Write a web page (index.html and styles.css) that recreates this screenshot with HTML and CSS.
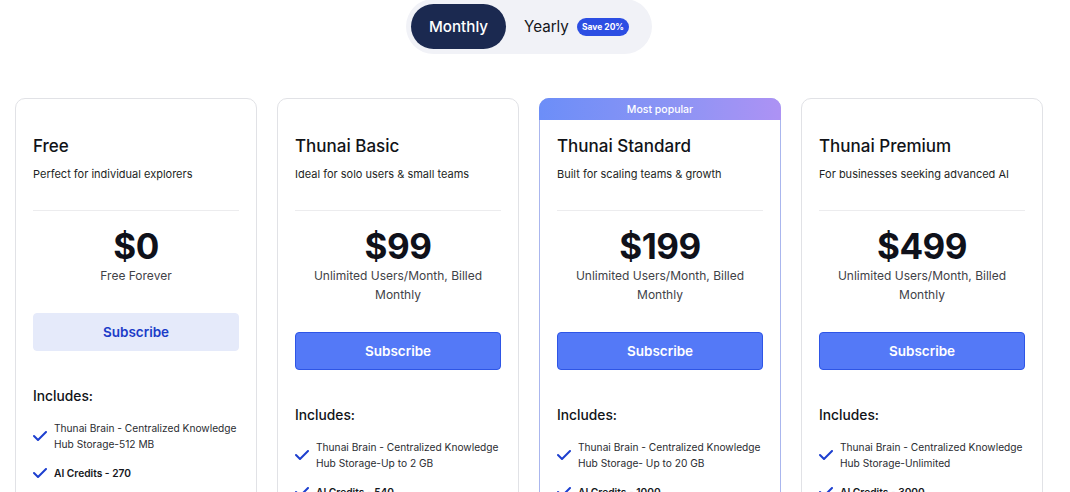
FILE: index.html
```html
<!DOCTYPE html>
<html lang="en">
<head>
<meta charset="utf-8">
<title>Thunai Pricing</title>
<link rel="stylesheet" href="styles.css">
</head>
<body>
<div class="page">
  <div class="toggle-row">
    <div class="toggle">
      <button class="opt active">Monthly</button>
      <div class="opt yearly">Yearly <span class="badge">Save 20%</span></div>
    </div>
  </div>

  <div class="cards">
    <div class="card">
      <h2 class="title">Free</h2>
      <p class="sub">Perfect for individual explorers</p>
      <hr class="divider">
      <div class="price">$0</div>
      <p class="note">Free Forever</p>
      <button class="btn btn-light">Subscribe</button>
      <h3 class="inc">Includes:</h3>
      <ul class="features">
        <li><svg class="chk" viewBox="0 0 14 10"><polyline points="1,5 5,9 13,1"/></svg><span>Thunai Brain - Centralized Knowledge Hub Storage-512 MB</span></li>
        <li><svg class="chk" viewBox="0 0 14 10"><polyline points="1,5 5,9 13,1"/></svg><span class="strong">AI Credits - 270</span></li>
      </ul>
    </div>

    <div class="card">
      <h2 class="title">Thunai Basic</h2>
      <p class="sub">Ideal for solo users &amp; small teams</p>
      <hr class="divider">
      <div class="price">$99</div>
      <p class="note">Unlimited Users/Month, Billed Monthly</p>
      <button class="btn btn-primary">Subscribe</button>
      <h3 class="inc">Includes:</h3>
      <ul class="features">
        <li><svg class="chk" viewBox="0 0 14 10"><polyline points="1,5 5,9 13,1"/></svg><span>Thunai Brain - Centralized Knowledge Hub Storage-Up to 2 GB</span></li>
        <li><svg class="chk" viewBox="0 0 14 10"><polyline points="1,5 5,9 13,1"/></svg><span class="strong">AI Credits - 540</span></li>
      </ul>
    </div>

    <div class="card popular">
      <div class="ribbon">Most popular</div>
      <h2 class="title">Thunai Standard</h2>
      <p class="sub">Built for scaling teams &amp; growth</p>
      <hr class="divider">
      <div class="price">$199</div>
      <p class="note">Unlimited Users/Month, Billed Monthly</p>
      <button class="btn btn-primary">Subscribe</button>
      <h3 class="inc">Includes:</h3>
      <ul class="features">
        <li><svg class="chk" viewBox="0 0 14 10"><polyline points="1,5 5,9 13,1"/></svg><span>Thunai Brain - Centralized Knowledge Hub Storage- Up to 20 GB</span></li>
        <li><svg class="chk" viewBox="0 0 14 10"><polyline points="1,5 5,9 13,1"/></svg><span class="strong">AI Credits - 1000</span></li>
      </ul>
    </div>

    <div class="card">
      <h2 class="title">Thunai Premium</h2>
      <p class="sub">For businesses seeking advanced AI</p>
      <hr class="divider">
      <div class="price">$499</div>
      <p class="note">Unlimited Users/Month, Billed Monthly</p>
      <button class="btn btn-primary">Subscribe</button>
      <h3 class="inc">Includes:</h3>
      <ul class="features">
        <li><svg class="chk" viewBox="0 0 14 10"><polyline points="1,5 5,9 13,1"/></svg><span>Thunai Brain - Centralized Knowledge Hub Storage-Unlimited</span></li>
        <li><svg class="chk" viewBox="0 0 14 10"><polyline points="1,5 5,9 13,1"/></svg><span class="strong">AI Credits - 3000</span></li>
      </ul>
    </div>
  </div>
</div>
</body>
</html>
```

FILE: styles.css
```css
* { box-sizing: border-box; }
html, body { margin: 0; padding: 0; background: #ffffff; }
body {
  font-family: Inter, "Noto Sans", "Liberation Sans", sans-serif;
  color: #111318;
  overflow: hidden;
}
.page {
  width: 1058px;
  padding: 0 15px;
}
.toggle-row {
  display: flex;
  justify-content: center;
}
.toggle {
  display: flex;
  align-items: center;
  height: 55px;
  padding: 5px 23px 5px 5px;
  background: #f1f2f7;
  border-radius: 28px;
  margin-top: -1px;
}
.opt {
  font-family: inherit;
  font-size: 15.2px;
  font-weight: 500;
  border: 0;
  background: none;
  color: #15171c;
  display: flex;
  align-items: center;
}
.opt.active {
  height: 45px;
  width: 95px;
  justify-content: center;
  background: #1b2950;
  color: #ffffff;
  border-radius: 23px;
  padding: 0;
}
.yearly {
  padding-left: 18px;
  gap: 8px;
  font-weight: 400;
}
.badge {
  background: #2c4ee3;
  color: #ffffff;
  font-size: 8.5px;
  font-weight: 700;
  height: 18px;
  padding: 0 5px;
  border-radius: 9px;
  display: inline-flex;
  align-items: center;
}
.cards {
  display: grid;
  grid-template-columns: repeat(4, 242px);
  gap: 20px;
  margin-top: 44px;
}
.card {
  position: relative;
  border: 1px solid #e1e2e6;
  border-radius: 10px;
  padding: 35px 17px 40px;
  background: #ffffff;
}
.card.popular {
  border-color: #aab6ee;
}
.ribbon {
  position: absolute;
  top: -1px;
  left: -1px;
  right: -1px;
  height: 22px;
  border-radius: 10px 10px 0 0;
  background: linear-gradient(90deg, #6c8ef8 0%, #8f94f4 60%, #ad92f4 100%);
  color: #ffffff;
  font-size: 10.5px;
  font-weight: 500;
  display: flex;
  align-items: center;
  justify-content: center;
}
.title {
  margin: 0;
  font-size: 17px;
  line-height: 24px;
  font-weight: 500;
  color: #111318;
}
.sub {
  margin: 8px 0 0;
  font-size: 11px;
  line-height: 16px;
  color: #1d1f24;
}
.divider {
  margin: 28px 0 0;
  border: 0;
  border-top: 1px solid #ececee;
  height: 0;
}
.price {
  margin-top: 15px;
  text-align: center;
  font-size: 35px;
  line-height: 40px;
  font-weight: 700;
  color: #0f111a;
  letter-spacing: -0.5px;
}
.note {
  margin: 0;
  text-align: center;
  font-size: 12px;
  line-height: 19px;
  color: #3f4247;
}
.btn {
  display: block;
  width: 100%;
  height: 38px;
  margin-top: 28px;
  border-radius: 4px;
  font-family: inherit;
  font-size: 13.5px;
  font-weight: 600;
  cursor: pointer;
}
.btn-light {
  background: #e5eafa;
  border: 1px solid #e5eafa;
  color: #1b3cc8;
}
.btn-primary {
  background: #5479f7;
  border: 1px solid #2e55e6;
  color: #ffffff;
}
.inc {
  margin: 35px 0 0;
  font-size: 13.8px;
  line-height: 20px;
  font-weight: 500;
  color: #111318;
}
.features {
  list-style: none;
  margin: 14px 0 0;
  padding: 0;
  display: flex;
  flex-direction: column;
  gap: 13px;
}
.features li {
  display: flex;
  align-items: center;
  gap: 7px;
  font-size: 10.2px;
  line-height: 16px;
  color: #2a2c31;
}
.chk {
  flex: none;
  width: 14px;
  height: 10px;
  fill: none;
  stroke: #1d3fcf;
  stroke-width: 2;
  stroke-linecap: round;
  stroke-linejoin: round;
}
.strong {
  font-weight: 600;
  color: #15171c;
}
```
